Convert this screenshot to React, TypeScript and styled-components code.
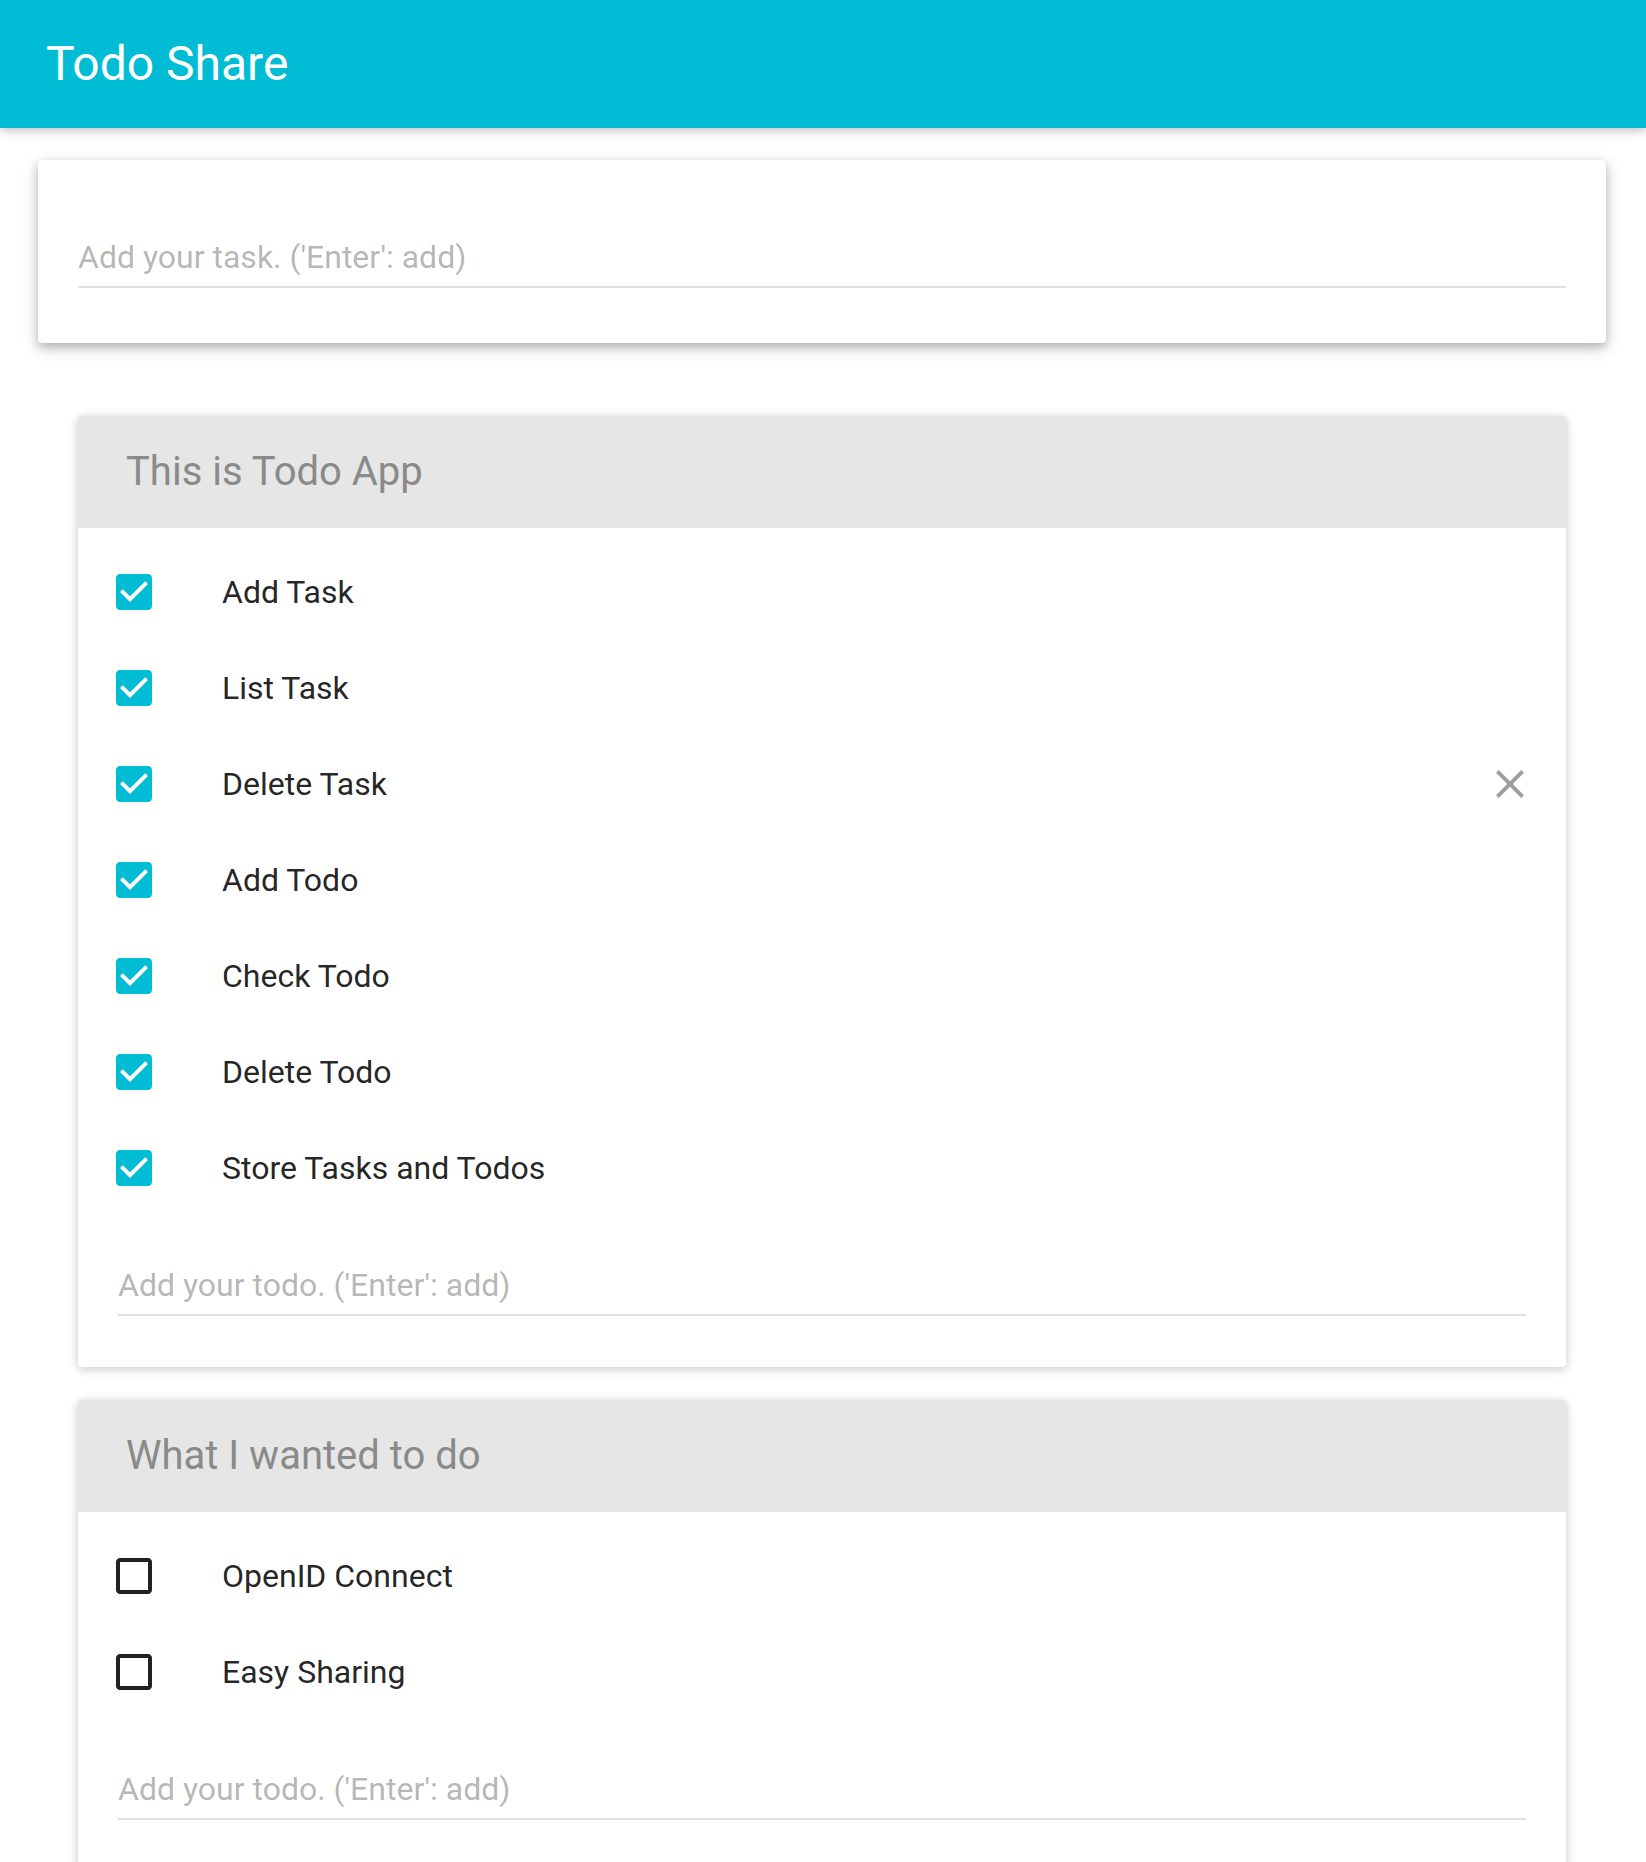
import React from "react";
import styled, { createGlobalStyle } from "styled-components";

const GlobalStyle = createGlobalStyle`
  html, body {
    margin: 0;
    padding: 0;
    background: #ffffff;
    font-family: Roboto, "Noto Sans", "Liberation Sans", sans-serif;
  }
  * { box-sizing: border-box; }
`;

const AppBar = styled.header`
  height: 128px;
  background: #00bcd4;
  display: flex;
  align-items: center;
  padding: 0 46px;
  box-shadow: 0 2px 12px rgba(0, 0, 0, 0.14), 0 2px 8px rgba(0, 0, 0, 0.14);
  position: relative;
  z-index: 1;
`;

const AppTitle = styled.h1`
  margin: 0;
  font-size: 48px;
  font-weight: 400;
  line-height: 128px;
  color: #ffffff;
`;

const Main = styled.main`
  margin: 32px 40px 0 38px;
`;

const TaskCard = styled.section`
  background: #ffffff;
  border-radius: 4px;
  padding: 73px 40px 55px;
  box-shadow: 0 5px 18px rgba(0, 0, 0, 0.16), 0 4px 10px rgba(0, 0, 0, 0.2);
`;

const Field = styled.div<{ $inset?: string }>`
  padding: ${(p) => p.$inset || "0"};
`;

const FieldLine = styled.div`
  border-bottom: 2px solid #e0e0e0;
  padding-bottom: 5px;
`;

const TextInput = styled.input`
  display: block;
  width: 100%;
  height: 48px;
  border: none;
  outline: none;
  padding: 0;
  margin: 0;
  background: transparent;
  font-family: Roboto, "Noto Sans", "Liberation Sans", sans-serif;
  font-size: 32px;
  line-height: 48px;
  color: rgba(0, 0, 0, 0.87);
  &::placeholder {
    color: rgba(0, 0, 0, 0.3);
    opacity: 1;
  }
`;

const Lists = styled.div`
  margin-top: 73px;
  padding: 0 40px;
  display: flex;
  flex-direction: column;
  gap: 33px;
`;

const TodoCard = styled.section`
  background: #ffffff;
  border-radius: 4px;
  overflow: hidden;
  box-shadow: 0 2px 12px rgba(0, 0, 0, 0.12), 0 2px 8px rgba(0, 0, 0, 0.12);
`;

const CardHeader = styled.div`
  background: #e6e6e6;
  padding: 32px 48px;
`;

const CardTitle = styled.h2`
  margin: 0;
  font-size: 40px;
  font-weight: 400;
  line-height: 48px;
  color: #8a8a8a;
`;

const List = styled.ul`
  list-style: none;
  margin: 0;
  padding: 16px 0;
`;

const Row = styled.li`
  height: 96px;
  display: flex;
  align-items: center;
  padding: 0 32px;
`;

const Label = styled.span`
  margin-left: 64px;
  font-size: 32px;
  line-height: 48px;
  color: rgba(0, 0, 0, 0.87);
  flex: 1;
`;

const IconSvg = styled.svg<{ $color: string }>`
  width: 48px;
  height: 48px;
  flex: none;
  fill: ${(p) => p.$color};
`;

const CheckIcon = ({ checked }: { checked: boolean }) =>
  checked ? (
    <IconSvg viewBox="0 0 24 24" $color="#00bcd4">
      <path d="M19 3H5c-1.11 0-2 .9-2 2v14c0 1.1.89 2 2 2h14c1.11 0 2-.9 2-2V5c0-1.1-.89-2-2-2zm-9 14l-5-5 1.41-1.41L10 14.17l7.59-7.59L19 8l-9 9z" />
    </IconSvg>
  ) : (
    <IconSvg viewBox="0 0 24 24" $color="#212121">
      <path d="M19 5v14H5V5h14m0-2H5c-1.1 0-2 .9-2 2v14c0 1.1.9 2 2 2h14c1.1 0 2-.9 2-2V5c0-1.1-.9-2-2-2z" />
    </IconSvg>
  );

const CloseIcon = () => (
  <IconSvg viewBox="0 0 24 24" $color="#9e9e9e">
    <path d="M19 6.41L17.59 5 12 10.59 6.41 5 5 6.41 10.59 12 5 17.59 6.41 19 12 13.41 17.59 19 19 17.59 13.41 12z" />
  </IconSvg>
);

type Todo = { text: string; done: boolean; hover?: boolean };

const lists: { title: string; todos: Todo[] }[] = [
  {
    title: "This is Todo App",
    todos: [
      { text: "Add Task", done: true },
      { text: "List Task", done: true },
      { text: "Delete Task", done: true, hover: true },
      { text: "Add Todo", done: true },
      { text: "Check Todo", done: true },
      { text: "Delete Todo", done: true },
      { text: "Store Tasks and Todos", done: true },
    ],
  },
  {
    title: "What I wanted to do",
    todos: [
      { text: "OpenID Connect", done: false },
      { text: "Easy Sharing", done: false },
    ],
  },
];

export default function App() {
  return (
    <>
      <GlobalStyle />
      <AppBar>
        <AppTitle>Todo Share</AppTitle>
      </AppBar>
      <Main>
        <TaskCard>
          <FieldLine>
            <TextInput placeholder="Add your task. ('Enter': add)" />
          </FieldLine>
        </TaskCard>
        <Lists>
          {lists.map((l) => (
            <TodoCard key={l.title}>
              <CardHeader>
                <CardTitle>{l.title}</CardTitle>
              </CardHeader>
              <List>
                {l.todos.map((t) => (
                  <Row key={t.text}>
                    <CheckIcon checked={t.done} />
                    <Label>{t.text}</Label>
                    {t.hover && <CloseIcon />}
                  </Row>
                ))}
              </List>
              <Field $inset="29px 40px 51px">
                <FieldLine>
                  <TextInput placeholder="Add your todo. ('Enter': add)" />
                </FieldLine>
              </Field>
            </TodoCard>
          ))}
        </Lists>
      </Main>
    </>
  );
}
